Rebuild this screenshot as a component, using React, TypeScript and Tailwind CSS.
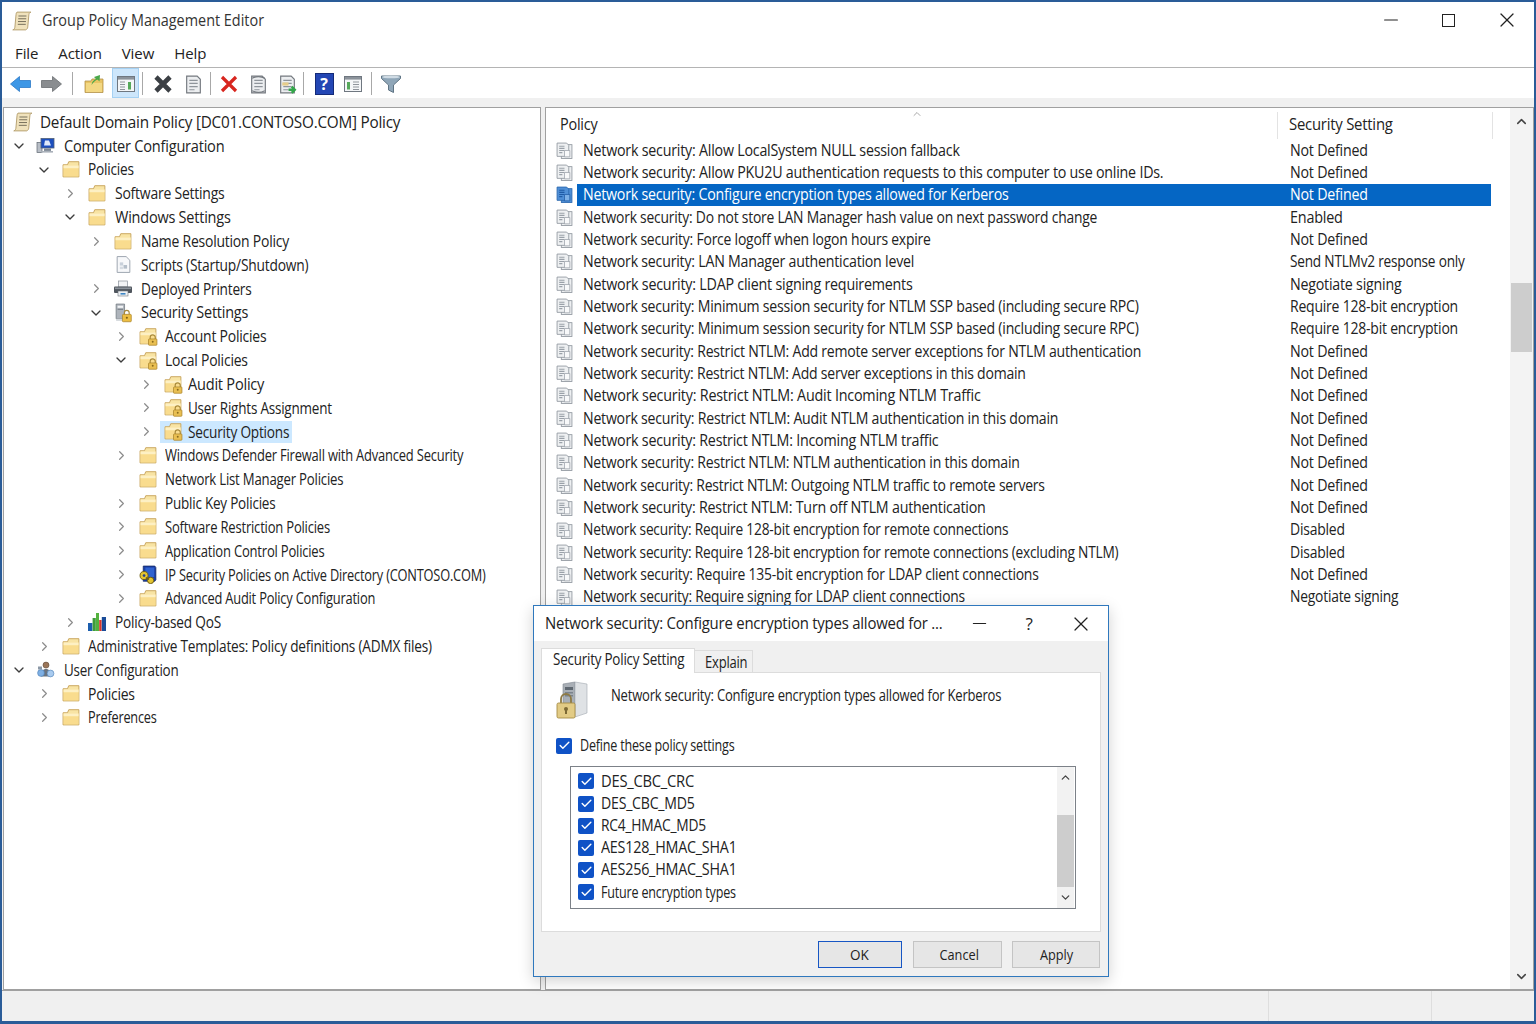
import { Check, ChevronDown, ChevronRight, ChevronUp, Minus, X } from "lucide-react";
import type { ReactNode } from "react";

const FONT = "font-['Open_Sans','Noto_Sans',sans-serif]";

// narrows a label to the width it has in the picture, fit is a scale-x class
const Fit = ({ fit, children, className = "" }: { fit: string; children: ReactNode; className?: string }) => (
  <span className={`inline-block origin-left whitespace-nowrap ${fit} ${className}`}>{children}</span>
);

// ---------- small drawn icons ----------

const Lock = () => (
  <g>
    <path d="M10.6 11.5V9.8a2.4 2.4 0 0 1 4.8 0v1.7" fill="none" stroke="#a98a3a" strokeWidth="1.1" />
    <rect x="9" y="11.3" width="8" height="6" rx="0.8" fill="#e9bf52" stroke="#a9832c" strokeWidth="0.7" />
    <circle cx="13" cy="14" r="0.9" fill="#8a6a1c" />
  </g>
);

const Folder = ({ lock = false }: { lock?: boolean }) => (
  <svg width="19" height="19" viewBox="0 0 18 18">
    <path d="M1 16V4.5h4.2L6.4 1.6H16V16Z" fill="#f8e4a4" stroke="#c8a45c" strokeWidth="0.9" />
    <rect x="1.5" y="5.2" width="14.2" height="10.4" fill="#f9dc8e" />
    <rect x="1.5" y="5.2" width="14.2" height="2.6" fill="#fdf0c4" />
    {lock && <Lock />}
  </svg>
);

const Scroll = () => (
  <svg width="20" height="20" viewBox="0 0 18 18">
    <path d="M4.5 1h12.5c-1.3.5-1.7 1.3-1.8 2.3l-1 11c-.1 1.3-.8 2.3-1.9 2.7H.7c1.1-.4 1.8-1.2 1.9-2.4l1-11.2c.1-1.2.3-2 .9-2.4Z" fill="#f0e2bc" stroke="#b09a68" strokeWidth="0.8" />
    <path d="M5.8 4.5h7.2M5.6 7h7.2M5.4 9.5h7.2M5.2 12h7.2" stroke="#77705c" strokeWidth="0.9" />
  </svg>
);

const ComputerCfg = () => (
  <svg width="20" height="19" viewBox="0 0 20 18">
    <rect x="1" y="6" width="5" height="10" fill="#b8bec6" stroke="#5d6670" strokeWidth="0.7" />
    <rect x="5" y="2" width="13" height="9.5" fill="#1d4fbe" stroke="#4f5f78" strokeWidth="0.8" />
    <path d="M9 4l4 0 2 5H8Z" fill="#dfe9fa" />
    <rect x="8" y="12" width="7" height="2.4" fill="#7d8794" />
    <rect x="5" y="14.5" width="12" height="1.6" fill="#a9b0b9" />
  </svg>
);

const UserCfg = () => (
  <svg width="20" height="19" viewBox="0 0 20 18">
    <circle cx="10" cy="4.6" r="3" fill="#9a7558" stroke="#5d4633" strokeWidth="0.6" />
    <path d="M5 16c0-5 2-7.5 5-7.5s5 2.5 5 7.5Z" fill="#6a7480" />
    <circle cx="5" cy="12.5" r="3.4" fill="#7fb0e4" stroke="#4d7fb5" strokeWidth="0.6" />
    <circle cx="14.5" cy="13" r="3.4" fill="#a9cbef" stroke="#4d7fb5" strokeWidth="0.6" />
    <rect x="2" y="6" width="4" height="3" fill="#8b98a6" />
  </svg>
);

const Scripts = () => (
  <svg width="19" height="19" viewBox="0 0 18 18">
    <path d="M3 1.5h8.5L15 5v11.5H3Z" fill="#f7f8fa" stroke="#9aa2ad" strokeWidth="0.9" />
    <rect x="5.5" y="7" width="3.2" height="3" fill="#c8d0da" />
    <rect x="9" y="9.5" width="3.4" height="3.4" fill="#b4bec9" />
    <rect x="5.5" y="11" width="3" height="2.4" fill="#d5dbe2" />
  </svg>
);

const Printer = () => (
  <svg width="20" height="19" viewBox="0 0 20 18">
    <rect x="5.5" y="1.5" width="9" height="6" fill="#f2f3f5" stroke="#8b929a" strokeWidth="0.7" />
    <rect x="1" y="7" width="18" height="6.5" rx="1" fill="#50565e" />
    <rect x="2" y="8" width="16" height="1.6" fill="#8b929a" />
    <rect x="5" y="11.5" width="10" height="5" fill="#eef1f4" stroke="#6f767e" strokeWidth="0.6" />
    <rect x="7.5" y="13.5" width="5" height="1.6" fill="#3d86c6" />
  </svg>
);

const SecuritySettings = () => (
  <svg width="19" height="20" viewBox="0 0 18 19">
    <path d="M2 1h8v14H2Z" fill="#aeb4bb" stroke="#6e757d" strokeWidth="0.7" />
    <rect x="3.4" y="2.6" width="5.2" height="2" fill="#f1f3f5" />
    <rect x="3.4" y="5.6" width="5.2" height="0.9" fill="#767d85" />
    <path d="M2 15h8v2H2Z" fill="#d4d8dc" />
    <path d="M9.8 11V9.3a2.3 2.3 0 0 1 4.6 0V11" fill="none" stroke="#a98a3a" strokeWidth="1.1" />
    <rect x="8" y="10.8" width="8.4" height="7" rx="0.8" fill="#edbe42" stroke="#a9832c" strokeWidth="0.7" />
    <circle cx="12.2" cy="14" r="1" fill="#7d5f14" />
  </svg>
);

const ServerLock = () => (
  <svg width="36" height="40" viewBox="0 0 36 40">
    <path d="M8 4 20 2V37L8 34Z" fill="#a9afb6" stroke="#7f8790" strokeWidth="0.6" />
    <path d="M20 2 32 4V33L20 37Z" fill="#dfe2e5" stroke="#a3a9b0" strokeWidth="0.6" />
    <rect x="10" y="7" width="8" height="3" fill="#5f6871" />
    <rect x="10" y="12" width="8" height="1.5" fill="#7b838c" />
    <rect x="10" y="15" width="8" height="1.5" fill="#7b838c" />
    <path d="M6 23v-4a5 5 0 0 1 10 0v4" fill="none" stroke="#8e7a45" strokeWidth="1.8" />
    <rect x="2" y="23" width="18" height="15" rx="1.5" fill="#e2cb85" stroke="#a68c45" strokeWidth="0.9" />
    <circle cx="11" cy="29" r="2" fill="#7d6a35" />
    <rect x="10" y="30" width="2" height="4" fill="#7d6a35" />
  </svg>
);

const IpSec = () => (
  <svg width="19" height="19" viewBox="0 0 18 18">
    <path d="M4 1h11l1 1.4V14l-1 1.4H4Z" fill="#1a3fa6" stroke="#11265f" strokeWidth="0.7" />
    <rect x="6" y="2.4" width="8.4" height="9" fill="#2f62d0" />
    <circle cx="4.8" cy="10" r="3.8" fill="#e4c531" stroke="#6d5b10" strokeWidth="0.9" />
    <circle cx="4.8" cy="10" r="1.3" fill="#25408f" />
    <circle cx="11" cy="14.6" r="3" fill="#e4c531" stroke="#6d5b10" strokeWidth="0.9" />
    <path d="M6.5 12l3 1.6" stroke="#6d5b10" strokeWidth="1.4" />
  </svg>
);

const Qos = () => (
  <svg width="20" height="20" viewBox="0 0 20 20">
    <rect x="1" y="11" width="4.4" height="8" fill="#1c5fae" />
    <rect x="5.6" y="6" width="3.2" height="13" fill="#3f9d3a" />
    <rect x="9" y="1" width="3" height="18" fill="#53b23e" />
    <rect x="12.2" y="8" width="2.4" height="11" fill="#d8362a" />
    <rect x="14.8" y="5" width="4.2" height="14" fill="#1a4c98" />
  </svg>
);

const PolicyItem = ({ selected = false }: { selected?: boolean }) => {
  const page = selected ? "#4f8fd6" : "#eef0f2";
  const edge = selected ? "#2b68ae" : "#8f969e";
  const ink = selected ? "#1f5ba5" : "#9aa1a9";
  return (
    <svg width="17" height="17" viewBox="0 0 16 16">
      <rect x="5" y="2.5" width="10" height="13" fill={page} stroke={edge} strokeWidth="0.8" />
      <path d="M1 1h9l2 2v10.5H1Z" fill={page} stroke={edge} strokeWidth="0.8" />
      <path d="M3 4h5M3 6h5M3 8h5M3 10h3" stroke={ink} strokeWidth="1" />
      <path d="M8 8h5v6H8Z" fill={selected ? "#7db0e6" : "#f8f9fa"} stroke={ink} strokeWidth="0.7" />
    </svg>
  );
};

// ---------- toolbar ----------

const DocTool = ({ kind }: { kind: "plain" | "round" | "export" }) => (
  <svg width="21" height="21" viewBox="0 0 20 20">
    <path d="M3.5 2h10l3 3v13h-13Z" fill="#eceef0" stroke="#74797f" strokeWidth="1.1" />
    <path d="M6 6h8M6 9h8M6 12h8M6 15h5" stroke="#8f959b" strokeWidth="1.1" />
    {kind === "round" && <path d="M4 4c4-2 8-2 12 0M4 16c4 2 8 2 12 0" fill="none" stroke="#74797f" strokeWidth="1" />}
    {kind === "export" && (
      <g>
        <rect x="5" y="8" width="6" height="3" fill="#e6cd8a" />
        <path d="M11 15h5M14 12l3 3-3 3" fill="none" stroke="#33a64a" strokeWidth="2.2" />
      </g>
    )}
  </svg>
);

const TableTool = () => (
  <svg width="20" height="20" viewBox="0 0 20 20">
    <rect x="1.5" y="2.5" width="17" height="15" fill="#f4f6f8" stroke="#6f7780" strokeWidth="1" />
    <rect x="2" y="3" width="16" height="2.6" fill="#8b929a" />
    <rect x="4" y="8" width="3" height="7.5" fill="#56a95b" />
    <path d="M10 8h6M10 10.5h6M10 13h6M10 15.5h6" stroke="#8f959c" strokeWidth="1.2" />
  </svg>
);

const Tool = ({ children, active = false }: { children: ReactNode; active?: boolean }) => (
  <div className={`h-full pt-[2px] flex items-center justify-center ${active ? "w-[27px] bg-[#cde6fb] border border-[#a5d1f3]" : "w-[28px]"}`}>
    {children}
  </div>
);

const Sep = ({ className }: { className: string }) => <div className={`w-px h-[23px] bg-[#a8a8a8] ${className}`} />;

const Toolbar = () => (
  <div className="h-[30px] bg-white flex items-center pl-[5px]">
    <Tool>
      <svg width="24" height="20" viewBox="0 0 24 20">
        <path d="M1.5 10 10.5 2.5V6.5H21.5V13.5H10.5V17.5Z" fill="#3d97e6" stroke="#2b78c6" strokeWidth="0.8" />
      </svg>
    </Tool>
    <div className="ml-[2px] h-full">
      <Tool>
        <svg width="24" height="20" viewBox="0 0 24 20">
          <path d="M22.5 10 13.5 2.5V6.5H2.5V13.5H13.5V17.5Z" fill="#8a8d90" stroke="#6b6e71" strokeWidth="0.8" />
        </svg>
      </Tool>
    </div>
    <Sep className="ml-[7px]" />
    <div className="ml-[7px] h-full">
      <Tool>
        <svg width="22" height="20" viewBox="0 0 22 20">
          <path d="M2 18.5V7h6l1-2h11v13.5Z" fill="#e9c463" stroke="#b2924b" strokeWidth="0.8" />
          <path d="M3 9h16v9H3Z" fill="#f3d883" />
          <path d="M8.5 11c.3-3 2-5 4.5-6L11 3l6-2-.5 6.5-2-2c-2 .8-4 2.5-6 5.5Z" fill="#4aa84a" />
        </svg>
      </Tool>
    </div>
    <div className="ml-[4px] h-full">
      <Tool active>
        <svg width="20" height="20" viewBox="0 0 20 20">
          <rect x="1.5" y="2.5" width="17" height="15" fill="#f4f6f8" stroke="#6f7780" strokeWidth="1" />
          <rect x="2" y="3" width="16" height="2.6" fill="#8b929a" />
          <path d="M4 8h5M4 10.5h5M4 13h5M4 15.5h5" stroke="#8f959c" strokeWidth="1.2" />
          <rect x="12" y="8" width="3" height="7.5" fill="#56a95b" />
        </svg>
      </Tool>
    </div>
    <Sep className="ml-[3px]" />
    <div className="ml-[6px] h-full">
      <Tool>
        <svg width="22" height="22" viewBox="0 0 22 22">
          <path d="M4 4l14 14M18 4 4 18" stroke="#3b3f44" strokeWidth="4.6" />
        </svg>
      </Tool>
    </div>
    <div className="ml-[2px] h-full">
      <Tool><DocTool kind="plain" /></Tool>
    </div>
    <Sep className="ml-[3px]" />
    <div className="ml-[4px] h-full">
      <Tool>
        <svg width="20" height="20" viewBox="0 0 20 20">
          <path d="M3 3l14 14M17 3 3 17" stroke="#d8261f" strokeWidth="3.2" />
        </svg>
      </Tool>
    </div>
    <div className="ml-[1px] h-full">
      <Tool><DocTool kind="round" /></Tool>
    </div>
    <div className="ml-[1px] h-full">
      <Tool><DocTool kind="export" /></Tool>
    </div>
    <Sep className="ml-[2px]" />
    <div className="ml-[6px] h-full">
      <Tool>
        <div className="w-[19px] h-[22px] bg-[#2346b4] border border-[#142a78] flex items-center justify-center text-white text-[16px] font-bold leading-none">?</div>
      </Tool>
    </div>
    <div className="ml-[1px] h-full">
      <Tool><TableTool /></Tool>
    </div>
    <Sep className="ml-[4px]" />
    <div className="ml-[5px] h-full">
      <Tool>
        <svg width="22" height="20" viewBox="0 0 22 20">
          <path d="M1.5 2h19v2.5L13.5 11v7.5l-5-2.5v-5L1.5 4.5Z" fill="#8fa6b8" stroke="#5f7484" strokeWidth="1" />
          <ellipse cx="11" cy="3" rx="9" ry="1.3" fill="#cfdbe4" />
        </svg>
      </Tool>
    </div>
  </div>
);

// ---------- tree ----------

type TreeIcon = "folder" | "lock" | "scroll" | "computer" | "user" | "scripts" | "printer" | "security" | "ipsec" | "qos";
type TreeRow = { label: string; level: number; icon: TreeIcon; fit: string; state?: "open" | "closed"; selected?: boolean };

const LEVEL_PADDING = ["pl-[7px]", "pl-[32px]", "pl-[58px]", "pl-[84px]", "pl-[109px]", "pl-[134px]"];

const TREE: TreeRow[] = [
  { label: "Default Domain Policy [DC01.CONTOSO.COM] Policy", level: -1, icon: "scroll", fit: "scale-x-[0.986]" },
  { label: "Computer Configuration", level: 0, icon: "computer", state: "open", fit: "scale-x-[0.94]" },
  { label: "Policies", level: 1, icon: "folder", state: "open", fit: "scale-x-[0.88]" },
  { label: "Software Settings", level: 2, icon: "folder", state: "closed", fit: "scale-x-[0.90]" },
  { label: "Windows Settings", level: 2, icon: "folder", state: "open", fit: "scale-x-[0.935]" },
  { label: "Name Resolution Policy", level: 3, icon: "folder", state: "closed", fit: "scale-x-[0.90]" },
  { label: "Scripts (Startup/Shutdown)", level: 3, icon: "scripts", fit: "scale-x-[0.89]" },
  { label: "Deployed Printers", level: 3, icon: "printer", state: "closed", fit: "scale-x-[0.88]" },
  { label: "Security Settings", level: 3, icon: "security", state: "open", fit: "scale-x-[0.93]" },
  { label: "Account Policies", level: 4, icon: "lock", state: "closed", fit: "scale-x-[0.90]" },
  { label: "Local Policies", level: 4, icon: "lock", state: "open", fit: "scale-x-[0.90]" },
  { label: "Audit Policy", level: 5, icon: "lock", state: "closed", fit: "scale-x-[0.94]" },
  { label: "User Rights Assignment", level: 5, icon: "lock", state: "closed", fit: "scale-x-[0.87]" },
  { label: "Security Options", level: 5, icon: "lock", state: "closed", selected: true, fit: "scale-x-[0.88] -mr-[14px]" },
  { label: "Windows Defender Firewall with Advanced Security", level: 4, icon: "folder", state: "closed", fit: "scale-x-[0.835]" },
  { label: "Network List Manager Policies", level: 4, icon: "folder", fit: "scale-x-[0.85]" },
  { label: "Public Key Policies", level: 4, icon: "folder", state: "closed", fit: "scale-x-[0.87]" },
  { label: "Software Restriction Policies", level: 4, icon: "folder", state: "closed", fit: "scale-x-[0.84]" },
  { label: "Application Control Policies", level: 4, icon: "folder", state: "closed", fit: "scale-x-[0.84]" },
  { label: "IP Security Policies on Active Directory (CONTOSO.COM)", level: 4, icon: "ipsec", state: "closed", fit: "scale-x-[0.825]" },
  { label: "Advanced Audit Policy Configuration", level: 4, icon: "folder", state: "closed", fit: "scale-x-[0.83]" },
  { label: "Policy-based QoS", level: 2, icon: "qos", state: "closed", fit: "scale-x-[0.88]" },
  { label: "Administrative Templates: Policy definitions (ADMX files)", level: 1, icon: "folder", state: "closed", fit: "scale-x-[0.88]" },
  { label: "User Configuration", level: 0, icon: "user", state: "open", fit: "scale-x-[0.865]" },
  { label: "Policies", level: 1, icon: "folder", state: "closed", fit: "scale-x-[0.90]" },
  { label: "Preferences", level: 1, icon: "folder", state: "closed", fit: "scale-x-[0.82]" },
];

const LABEL_GAP: Record<number, string> = { [-1]: "ml-[7px]", 0: "ml-[8px]", 1: "ml-[7px]", 2: "ml-[8px]", 3: "ml-[8px]", 4: "ml-[7px]", 5: "ml-[5px]" };

const renderTreeIcon = (icon: TreeIcon) => {
  switch (icon) {
    case "lock":
      return <Folder lock />;
    case "scroll":
      return <Scroll />;
    case "computer":
      return <ComputerCfg />;
    case "user":
      return <UserCfg />;
    case "scripts":
      return <Scripts />;
    case "printer":
      return <Printer />;
    case "security":
      return <SecuritySettings />;
    case "ipsec":
      return <IpSec />;
    case "qos":
      return <Qos />;
    default:
      return <Folder />;
  }
};

const Tree = () => (
  <div className="w-[538px] bg-white border border-[#a0a0a0] pt-[2px] overflow-hidden">
    {TREE.map((row, i) => (
      <div key={i} className={`h-[23.84px] flex items-center ${row.level >= 0 ? LEVEL_PADDING[row.level] : ""}`}>
        {row.level >= 0 && (
          <div className="w-4 shrink-0 flex justify-center">
            {row.state === "open" && <ChevronDown size={16} strokeWidth={2} className="text-[#3c3c3c]" />}
            {row.state === "closed" && <ChevronRight size={15} strokeWidth={1.9} className="text-[#8c8c8c]" />}
          </div>
        )}
        <div className={`ml-[6px] shrink-0 pl-[3px] pr-[3px] h-[22px] flex items-center ${row.selected ? "bg-[#cce8ff]" : ""}`}>
          <div className="w-5 flex justify-center">{renderTreeIcon(row.icon)}</div>
          <Fit fit={row.fit} className={`${LABEL_GAP[row.level]} pt-px text-[15.5px] tracking-[-0.24px] text-[#222]`}>
            {row.label}
          </Fit>
        </div>
      </div>
    ))}
  </div>
);

// ---------- policy list ----------

const POLICIES: [string, string, string, string][] = [
  ["Network security: Allow LocalSystem NULL session fallback", "scale-x-[0.92]", "Not Defined", "scale-x-[0.917]"],
  ["Network security: Allow PKU2U authentication requests to this computer to use online IDs.", "scale-x-[0.92]", "Not Defined", "scale-x-[0.917]"],
  ["Network security: Configure encryption types allowed for Kerberos", "scale-x-[0.916]", "Not Defined", "scale-x-[0.917]"],
  ["Network security: Do not store LAN Manager hash value on next password change", "scale-x-[0.895]", "Enabled", "scale-x-[0.93]"],
  ["Network security: Force logoff when logon hours expire", "scale-x-[0.90]", "Not Defined", "scale-x-[0.917]"],
  ["Network security: LAN Manager authentication level", "scale-x-[0.914]", "Send NTLMv2 response only", "scale-x-[0.88]"],
  ["Network security: LDAP client signing requirements", "scale-x-[0.922]", "Negotiate signing", "scale-x-[0.918]"],
  ["Network security: Minimum session security for NTLM SSP based (including secure RPC)", "scale-x-[0.91]", "Require 128-bit encryption", "scale-x-[0.903]"],
  ["Network security: Minimum session security for NTLM SSP based (including secure RPC)", "scale-x-[0.91]", "Require 128-bit encryption", "scale-x-[0.903]"],
  ["Network security: Restrict NTLM: Add remote server exceptions for NTLM authentication", "scale-x-[0.906]", "Not Defined", "scale-x-[0.917]"],
  ["Network security: Restrict NTLM: Add server exceptions in this domain", "scale-x-[0.904]", "Not Defined", "scale-x-[0.917]"],
  ["Network security: Restrict NTLM: Audit Incoming NTLM Traffic", "scale-x-[0.926]", "Not Defined", "scale-x-[0.917]"],
  ["Network security: Restrict NTLM: Audit NTLM authentication in this domain", "scale-x-[0.91]", "Not Defined", "scale-x-[0.917]"],
  ["Network security: Restrict NTLM: Incoming NTLM traffic", "scale-x-[0.922]", "Not Defined", "scale-x-[0.917]"],
  ["Network security: Restrict NTLM: NTLM authentication in this domain", "scale-x-[0.907]", "Not Defined", "scale-x-[0.917]"],
  ["Network security: Restrict NTLM: Outgoing NTLM traffic to remote servers", "scale-x-[0.899]", "Not Defined", "scale-x-[0.917]"],
  ["Network security: Restrict NTLM: Turn off NTLM authentication", "scale-x-[0.92]", "Not Defined", "scale-x-[0.917]"],
  ["Network security: Require 128-bit encryption for remote connections", "scale-x-[0.886]", "Disabled", "scale-x-[0.90]"],
  ["Network security: Require 128-bit encryption for remote connections (excluding NTLM)", "scale-x-[0.886]", "Disabled", "scale-x-[0.90]"],
  ["Network security: Require 135-bit encryption for LDAP client connections", "scale-x-[0.898]", "Not Defined", "scale-x-[0.917]"],
  ["Network security: Require signing for LDAP client connections", "scale-x-[0.89]", "Negotiate signing", "scale-x-[0.893]"],
];

const PolicyList = () => (
  <div className="flex-1 flex bg-white border border-[#a0a0a0] overflow-hidden">
    <div className="flex-1 flex flex-col">
      <div className="h-[31px] pt-[3px] flex items-center text-[15.5px] tracking-[-0.24px] text-[#222] relative">
        <div className="w-[731px] pl-[14px]"><Fit fit="scale-x-[0.93]">Policy</Fit></div>
        <ChevronUp size={12} strokeWidth={1.5} className="absolute left-[365px] top-0 text-[#8c8c8c]" />
        <div className="w-px h-[27px] bg-[#e3e3e3]" />
        <div className="w-[214px] pl-[11px]"><Fit fit="scale-x-[0.96]">Security Setting</Fit></div>
        <div className="w-px h-[27px] bg-[#e3e3e3]" />
      </div>
      <div>
        {POLICIES.map(([name, nameFit, value, valueFit], i) => {
          const selected = i === 2;
          return (
            <div key={i} className="h-[22.35px] flex items-center text-[15.5px] tracking-[-0.24px]">
              <div className="w-[31px] flex justify-end pr-[4px]">
                <PolicyItem selected={selected} />
              </div>
              <div className={`flex h-[22px] w-[914px] items-center ${selected ? "bg-[#0566c4] text-white" : "text-[#222]"}`}>
                <div className="w-[713px] pl-[6px]"><Fit fit={nameFit}>{name}</Fit></div>
                <Fit fit={valueFit}>{value}</Fit>
              </div>
            </div>
          );
        })}
      </div>
    </div>
    <div className="w-[23px] bg-[#f3f3f3] flex flex-col items-center">
      <ChevronUp size={15} strokeWidth={2.4} className="mt-[6px] text-[#444]" />
      <div className="mt-[154px] w-[21px] h-[69px] bg-[#cdcdcd]" />
      <div className="flex-1" />
      <ChevronDown size={15} strokeWidth={2.4} className="mb-[5px] text-[#444]" />
    </div>
  </div>
);

// ---------- dialog ----------

const Box = () => (
  <div className="w-[16px] h-[16px] rounded-[2px] bg-[#0f52c6] flex items-center justify-center">
    <Check size={13} strokeWidth={2.6} className="text-white" />
  </div>
);

const ENCRYPTION: [string, string][] = [
  ["DES_CBC_CRC", "scale-x-[0.95]"],
  ["DES_CBC_MD5", "scale-x-[0.91]"],
  ["RC4_HMAC_MD5", "scale-x-[0.89]"],
  ["AES128_HMAC_SHA1", "scale-x-[0.924]"],
  ["AES256_HMAC_SHA1", "scale-x-[0.924]"],
  ["Future encryption types", "scale-x-[0.81]"],
];

const DialogButton = ({ label, className, fit }: { label: string; className: string; fit: string }) => (
  <div className={`${className} h-[27px] bg-[#e6e6e6] flex items-center justify-center text-[15px] text-[#222] border`}>
    <span className={fit}>{label}</span>
  </div>
);

const Dialog = () => (
  <div className="absolute left-[531px] top-[603px] w-[576px] h-[372px] flex flex-col bg-[#f0f0f0] border border-[#2f78bd] shadow-[0_4px_14px_rgba(0,0,0,0.18)]">
    <div className="h-[35px] shrink-0 bg-white flex items-center pl-[11px] text-[15.5px] tracking-[-0.24px] text-[#222]">
      <div className="w-[424px] pt-px">
        <Fit fit="scale-x-[0.964]">Network security: Configure encryption types allowed for ...</Fit>
      </div>
      <Minus size={21} strokeWidth={1.3} className="text-[#222]" />
      <span className="ml-[32px] w-[14px] text-center text-[17px]">?</span>
      <X size={24} strokeWidth={1.2} className="ml-[33px] text-[#222]" />
    </div>
    <div className="h-[31px] shrink-0 pl-[7px] flex items-end text-[15.5px] tracking-[-0.24px] text-[#222]">
      <div className="w-[154px] h-[25px] bg-white border border-b-0 border-[#dcdcdc] flex items-center pl-[11px] pb-[2px] -mb-px relative">
        <Fit fit="scale-x-[0.865]">Security Policy Setting</Fit>
      </div>
      <div className="w-[58px] h-[22px] bg-[#f0f0f0] border border-l-0 border-b-0 border-[#dcdcdc] flex items-center pl-[10px] pt-[2px]">
        <Fit fit="scale-x-[0.84]">Explain</Fit>
      </div>
    </div>
    <div className="ml-[7px] w-[560px] h-[260px] shrink-0 bg-white border border-[#dcdcdc] flex flex-col">
      <div className="h-[44px] flex items-start pl-[13px] pt-[7px]">
        <ServerLock />
        <Fit fit="scale-x-[0.84]" className="ml-[20px] mt-[4px] text-[15.5px] tracking-[-0.24px] text-[#222]">
          Network security: Configure encryption types allowed for Kerberos
        </Fit>
      </div>
      <div className="mt-[17px] pl-[14px] flex items-center gap-[8px] text-[15.5px] tracking-[-0.24px] text-[#222]">
        <Box />
        <Fit fit="scale-x-[0.81]">Define these policy settings</Fit>
      </div>
      <div className="ml-[28px] mt-[9px] w-[506px] h-[143px] border border-[#7c8188] flex">
        <div className="flex-1 pt-[3px]">
          {ENCRYPTION.map(([item, fit]) => (
            <div key={item} className="h-[22.2px] flex items-center pl-[7px] gap-[7px] text-[15.5px] tracking-[-0.24px] text-[#222]">
              <Box />
              <Fit fit={fit}>{item}</Fit>
            </div>
          ))}
        </div>
        <div className="w-[17px] mr-[1px] bg-[#f2f2f2] flex flex-col items-center">
          <ChevronUp size={13} strokeWidth={2.4} className="mt-[4px] text-[#444]" />
          <div className="mt-[31px] w-full h-[72px] bg-[#cdcdcd]" />
          <div className="flex-1" />
          <ChevronDown size={13} strokeWidth={2.4} className="mb-[4px] text-[#444]" />
        </div>
      </div>
    </div>
    <div className="pt-[9px] pr-[8px] flex justify-end">
      <DialogButton label="OK" className="w-[84px] pr-[1px] border-[#1756c4]" fit="inline-block scale-x-[0.9]" />
      <DialogButton label="Cancel" className="ml-[11px] w-[89px] pl-[3px] border-[#c4c4c4]" fit="inline-block scale-x-[0.85]" />
      <DialogButton label="Apply" className="ml-[10px] w-[88px] pl-[2px] border-[#c4c4c4]" fit="inline-block scale-x-[0.85]" />
    </div>
  </div>
);

// ---------- page ----------

export default function App() {
  return (
    <div className={`${FONT} relative w-[1536px] h-[1024px] overflow-hidden flex flex-col bg-white border-t-[2px] border-l-[2px] border-r-[2px] border-b-[3px] border-[#2a5c98]`}>
      <div className="h-[38px] shrink-0 flex items-center pl-[10px] text-[15.5px] text-[#333]">
        <Scroll />
        <div className="ml-[10px] flex-1">
          <Fit fit="scale-x-[0.93]">Group Policy Management Editor</Fit>
        </div>
        <Minus size={22} strokeWidth={1.2} className="-mt-[2px] text-[#222]" />
        <div className="ml-[40px] -mt-[2px] w-[13px] h-[13px] border-[1.5px] border-[#222]" />
        <X size={24} strokeWidth={1.2} className="ml-[40px] mr-[15px] -mt-[2px] text-[#222]" />
      </div>
      <div className="h-[28px] shrink-0 flex items-center pl-[13px] gap-[20px] text-[15px] tracking-[-0.1px] text-[#222] border-b border-[#b4b4b4]">
        <span>File</span>
        <span>Action</span>
        <span>View</span>
        <span>Help</span>
      </div>
      <Toolbar />
      <div className="h-[9px] shrink-0 bg-[#f0f0f0]" />
      <div className="flex-1 min-h-0 flex pl-[1px] gap-[4px] bg-[#f0f0f0]">
        <Tree />
        <PolicyList />
      </div>
      <div className="h-[31px] shrink-0 bg-[#f0f0f0] border-t border-[#a0a0a0] flex justify-end">
        <div className="w-[163px] border-l border-[#dedede]" />
        <div className="w-[103px] border-l border-[#dedede]" />
      </div>
      <Dialog />
    </div>
  );
}
